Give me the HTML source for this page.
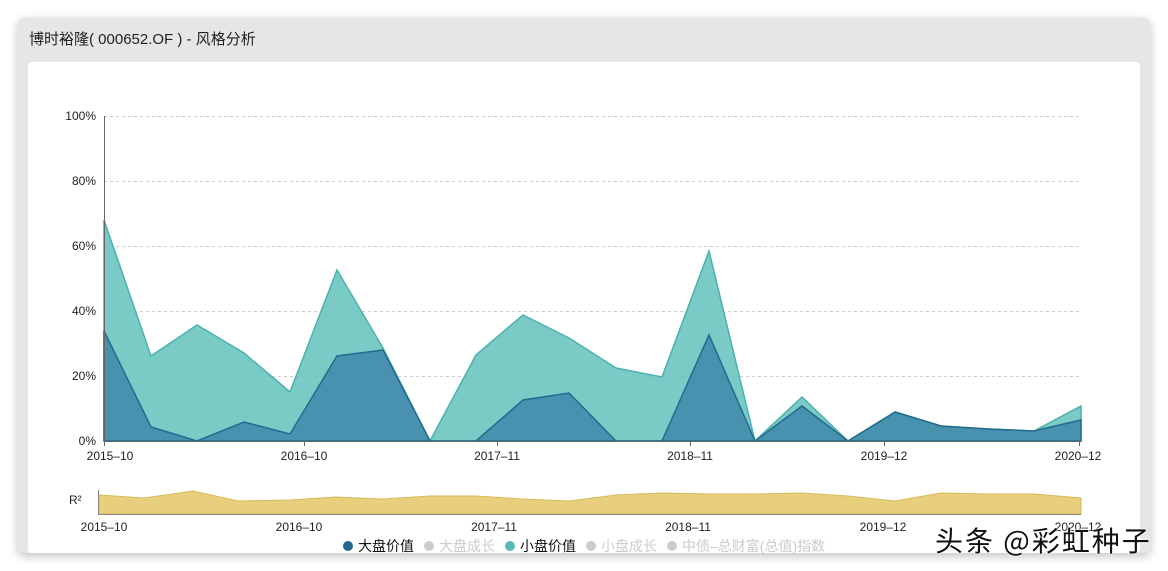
<!DOCTYPE html>
<html><head><meta charset="utf-8"><style>
body{margin:0;width:1168px;height:571px;background:#fff;font-family:"Liberation Sans","Noto Sans CJK SC",sans-serif;overflow:hidden;position:relative}
.panel{position:absolute;left:18px;top:18px;width:1132px;height:535px;background:#e6e6e6;border-radius:6px;box-shadow:0 3px 10px rgba(0,0,0,.25)}
.title{position:absolute;left:29px;top:28px;font-size:15px;color:#222}
.card{position:absolute;left:28px;top:62px;width:1112px;height:491px;background:#fff;border-radius:4px}
svg{position:absolute;left:0;top:0}
.wm{position:absolute;left:935px;top:520px;font-size:28px;color:#111;font-family:"Noto Sans CJK SC",sans-serif;text-shadow:0 0 2px #fff,0 0 2px #fff;letter-spacing:2px}
</style></head><body>
<div class="panel"></div>
<div class="title">博时裕隆( 000652.OF ) - 风格分析</div>
<div class="card"></div>
<svg width="1168" height="571" font-family="Liberation Sans, Noto Sans CJK SC, sans-serif" font-size="12" fill="#222">
<g stroke="#ccc" stroke-dasharray="3,3" stroke-width="1">
<line x1="104" y1="116.5" x2="1081" y2="116.5"/><line x1="104" y1="181.5" x2="1081" y2="181.5"/><line x1="104" y1="246.5" x2="1081" y2="246.5"/><line x1="104" y1="311.5" x2="1081" y2="311.5"/><line x1="104" y1="376.5" x2="1081" y2="376.5"/>
</g>
<polygon fill="#6cc4c0" fill-opacity=".9" stroke="#4ab2ae" stroke-width="1.5" points="104,441 104,220 151,356 197,325 244,353 290,392 337,270 383,348 430,441 476,355 523,315 569,338 616,368 662,377 709,251 755,441 802,397 848,441 895,412 941,426 988,429 1034,431 1081,406 1081,441"/>
<polygon fill="#3f88aa" fill-opacity=".85" stroke="#236a8e" stroke-width="1.5" points="104,441 104,331 151,427 197,441 244,422 290,434 337,356 383,350 430,441 476,441 523,400 569,393 616,441 662,441 709,335 755,441 802,406 848,441 895,412 941,426 988,429 1034,431 1081,420 1081,441"/>
<line x1="104.5" y1="116" x2="104.5" y2="442" stroke="#666"/>
<line x1="104" y1="441.5" x2="1081" y2="441.5" stroke="#666"/>
<g text-anchor="end"><text x="96" y="120">100%</text><text x="96" y="185">80%</text><text x="96" y="250">60%</text><text x="96" y="315">40%</text><text x="96" y="380">20%</text><text x="96" y="445">0%</text></g>
<g stroke="#666"><line x1="104.5" y1="442" x2="104.5" y2="446"/><line x1="304.5" y1="442" x2="304.5" y2="446"/><line x1="497.5" y1="442" x2="497.5" y2="446"/><line x1="690.5" y1="442" x2="690.5" y2="446"/><line x1="884.5" y1="442" x2="884.5" y2="446"/><line x1="1079.5" y1="442" x2="1079.5" y2="446"/></g>
<g text-anchor="middle"><text x="110" y="460">2015–10</text><text x="304" y="460">2016–10</text><text x="497" y="460">2017–11</text><text x="690" y="460">2018–11</text><text x="884" y="460">2019–12</text><text x="1078" y="460">2020–12</text></g>
<polygon fill="#e8cf7d" stroke="#d8b95a" stroke-width="1" points="99,514 99,495 144,498 193,491 238,501 290,500 336,497 383,499 430,496 476,496 523,499 569,501 616,495 662,493 709,494 755,494 802,493 848,496 895,501 941,493 988,494 1034,494 1081,498 1081,514"/>
<line x1="98.5" y1="490" x2="98.5" y2="514" stroke="#888"/>
<line x1="98" y1="514.5" x2="1081" y2="514.5" stroke="#888"/>
<text x="69" y="504">R²</text>
<g text-anchor="middle"><text x="104" y="531">2015–10</text><text x="299" y="531">2016–10</text><text x="494" y="531">2017–11</text><text x="688" y="531">2018–11</text><text x="883" y="531">2019–12</text><text x="1078" y="531">2020–12</text></g>
<g font-size="14">
<circle cx="348" cy="546" r="5" fill="#236a8e"/><text x="358" y="551" fill="#111">大盘价值</text>
<circle cx="429" cy="546" r="5" fill="#ccc"/><text x="439" y="551" fill="#ccc">大盘成长</text>
<circle cx="510" cy="546" r="5" fill="#5bbab6"/><text x="520" y="551" fill="#111">小盘价值</text>
<circle cx="591" cy="546" r="5" fill="#ccc"/><text x="601" y="551" fill="#ccc">小盘成长</text>
<circle cx="672" cy="546" r="5" fill="#ccc"/><text x="682" y="551" fill="#ccc">中债–总财富(总值)指数</text>
</g>
</svg>
<div class="wm">头条 @彩虹种子</div>
</body></html>
